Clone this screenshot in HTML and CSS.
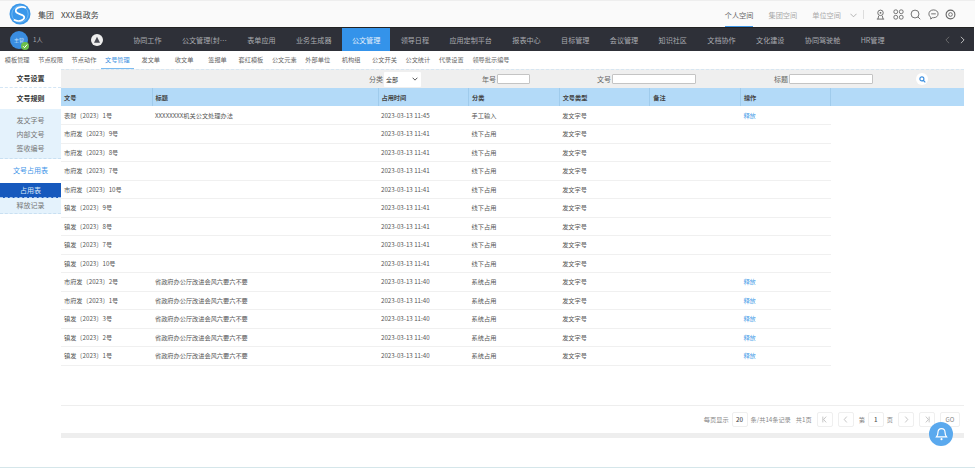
FILE: index.html
```html
<!DOCTYPE html>
<html lang="zh-CN">
  <head>
    <meta charset="UTF-8" />
    <title>文号管理</title>
    <link rel="stylesheet" href="styles.css">
  </head>
  <body>
    <!-- En-tête -->
    <header class="topbar">
      <svg class="logo" viewBox="0 0 22 22" width="22" height="22">
        <circle cx="11" cy="11" r="10.5" fill="#3a97ea" />
        <circle cx="11" cy="11" r="8.200" fill="none" stroke="#7fc0f5" stroke-width=".8" />
        <path d="M17 5C12.500 2.800 6.300 4.500 6.800 8.200S15.500 11 15.300 14.300 9.800 19.200 4.800 16.800" fill="none" stroke="#fff" stroke-width="1.700" />
      </svg>
      <span class="org">集团</span>
      <span class="org-name">XXX县政务</span>
      <nav class="spaces">
        <a class="space active">个人空间</a>
        <a class="space">集团空间</a>
        <a class="space">单位空间</a>
        <svg class="chevron" viewBox="0 0 8 5" width="7" height="5"><path d="M.5.5 4 4 7.500.5" fill="none" stroke="#999" stroke-width=".8" /></svg>
        <span class="divider"></span>
      </nav>
      <div class="tools">
        <svg viewBox="0 0 12 12" width="11" height="11"><circle cx="6" cy="4.200" r="3" fill="none" stroke="#666" /><circle cx="6" cy="4.200" r="1" fill="#666" /><path d="M2 11h8M4 7.500 3.200 11M8 7.500l.8 3.500" fill="none" stroke="#666" /></svg>
        <svg viewBox="0 0 12 12" width="11" height="11"><g fill="none" stroke="#666"><rect x="1" y="1" width="4" height="4" rx="1.600" /><rect x="7" y="1" width="4" height="4" rx="1.600" /><rect x="1" y="7" width="4" height="4" rx="1.600" /><rect x="7" y="7" width="4" height="4" rx="1.600" /></g></svg>
        <svg viewBox="0 0 12 12" width="11" height="11"><circle cx="5.500" cy="5.500" r="4.300" fill="none" stroke="#666" /><path d="m8.600 8.600 2.600 2.600" stroke="#666" /></svg>
        <svg viewBox="0 0 12 12" width="11" height="11"><path d="M6 1c3 0 5 1.800 5 4.300S9 9.500 6 9.500H4.800L3 11V9C1.800 8.300 1 7 1 5.300 1 2.800 3 1 6 1Z" fill="none" stroke="#666" /><path d="M3.500 5.300h5" stroke="#666" /></svg>
        <svg viewBox="0 0 12 12" width="11" height="11"><circle cx="6" cy="6" r="4.800" fill="none" stroke="#666" stroke-width="1.200" /><circle cx="6" cy="6" r="2" fill="none" stroke="#666" /></svg>
      </div>
    </header>

    <!-- Menu principal -->
    <nav class="mainnav">
      <div class="user">
        <span class="avatar">主管<i class="check"><svg viewBox="0 0 8 8" width="8" height="8"><path d="M2 4.200 3.500 5.700 6.200 2.500" fill="none" stroke="#fff" /></svg></i></span>
        <span class="count">1人</span>
      </div>
      <span class="home"><svg viewBox="0 0 12 12" width="12" height="12"><circle cx="6" cy="6" r="6" fill="#eee" /><path d="M6 2.800 9 8.800H3Z" fill="#4a4c55" /></svg></span>
      <div class="menu">
        <a>协同工作</a>
        <a>公文管理(封…</a>
        <a>表单应用</a>
        <a>业务生成器</a>
        <a class="active">公文管理</a>
        <a>领导日程</a>
        <a>应用定制平台</a>
        <a>报表中心</a>
        <a>目标管理</a>
        <a>会议管理</a>
        <a>知识社区</a>
        <a>文档协作</a>
        <a>文化建设</a>
        <a>协同驾驶舱</a>
        <a>HR管理</a>
      </div>
      <div class="arrows">
        <svg viewBox="0 0 6 10" width="5" height="8"><path d="M5 1 1 5l4 4" fill="none" stroke="#777" /></svg>
        <svg viewBox="0 0 6 10" width="5" height="8"><path d="m1 1 4 4-4 4" fill="none" stroke="#ddd" /></svg>
      </div>
    </nav>

    <!-- Onglets -->
    <nav class="tabs">
      <a>模板管理</a>
      <a>节点权限</a>
      <a>节点动作</a>
      <a class="active">文号管理</a>
      <a>发文单</a>
      <a>收文单</a>
      <a>签报单</a>
      <a>套红模板</a>
      <a>公文元素</a>
      <a>外部单位</a>
      <a>机构组</a>
      <a>公文开关</a>
      <a>公文统计</a>
      <a>代录设置</a>
      <a class="wide">领导批示编号</a>
    </nav>

    <div class="layout">
      <aside class="sidebar">
        <div class="side-title">文号设置</div>
        <div class="side-title tall">文号规则</div>
        <ul class="side-list">
          <li>发文字号</li>
          <li>内部文号</li>
          <li>签收编号</li>
        </ul>
        <div class="side-link">文号占用表</div>
        <ul class="side-sub">
          <li class="active">占用表</li>
          <li>释放记录</li>
        </ul>
      </aside>

      <main class="content">
        <form class="filters">
          <label class="filter f-type">分类<span class="select">全部<svg viewBox="0 0 8 5" width="6" height="4"><path d="M.8.8 4 4 7.200.8" fill="none" stroke="#333" stroke-width="1.100" /></svg></span></label>
          <label class="filter f-year">年号<span class="field short"></span></label>
          <label class="filter f-num">文号<span class="field"></span></label>
          <label class="filter f-title">标题<span class="field"></span></label>
          <span class="search"><svg viewBox="0 0 8 8" width="7" height="7"><circle cx="3.300" cy="3.300" r="2.300" fill="none" stroke="#3c8fe0" stroke-width="1.300" /><path d="m5 5 2.200 2.200" stroke="#3c8fe0" stroke-width="1.300" /></svg></span>
        </form>

        <div class="table-area">
          <table class="grid">
            <colgroup>
              <col class="c1" /><col class="c2" /><col class="c3" /><col class="c3" /><col class="c3" /><col class="c3" /><col class="c3" /><col />
            </colgroup>
            <thead>
              <tr><th>文号</th><th>标题</th><th>占用时间</th><th>分类</th><th>文号类型</th><th>备注</th><th>操作</th><th></th></tr>
            </thead>
            <tbody>
              <tr><td>表财〔2023〕1号</td><td>XXXXXXXX机关公文处理办法</td><td>2023-03-13 11:45</td><td>手工输入</td><td>发文字号</td><td></td><td><a>释放</a></td></tr>
              <tr><td>市府发〔2023〕9号</td><td></td><td>2023-03-13 11:41</td><td>线下占用</td><td>发文字号</td><td></td><td></td></tr>
              <tr><td>市府发〔2023〕8号</td><td></td><td>2023-03-13 11:41</td><td>线下占用</td><td>发文字号</td><td></td><td></td></tr>
              <tr><td>市府发〔2023〕7号</td><td></td><td>2023-03-13 11:41</td><td>线下占用</td><td>发文字号</td><td></td><td></td></tr>
              <tr><td>市府发〔2023〕10号</td><td></td><td>2023-03-13 11:41</td><td>线下占用</td><td>发文字号</td><td></td><td></td></tr>
              <tr><td>镇发〔2023〕9号</td><td></td><td>2023-03-13 11:41</td><td>线下占用</td><td>发文字号</td><td></td><td></td></tr>
              <tr><td>镇发〔2023〕8号</td><td></td><td>2023-03-13 11:41</td><td>线下占用</td><td>发文字号</td><td></td><td></td></tr>
              <tr><td>镇发〔2023〕7号</td><td></td><td>2023-03-13 11:41</td><td>线下占用</td><td>发文字号</td><td></td><td></td></tr>
              <tr><td>镇发〔2023〕10号</td><td></td><td>2023-03-13 11:41</td><td>线下占用</td><td>发文字号</td><td></td><td></td></tr>
              <tr><td>市府发〔2023〕2号</td><td>省政府办公厅改进会风六要六不要</td><td>2023-03-13 11:40</td><td>系统占用</td><td>发文字号</td><td></td><td><a>释放</a></td></tr>
              <tr><td>市府发〔2023〕1号</td><td>省政府办公厅改进会风六要六不要</td><td>2023-03-13 11:40</td><td>系统占用</td><td>发文字号</td><td></td><td><a>释放</a></td></tr>
              <tr><td>镇发〔2023〕3号</td><td>省政府办公厅改进会风六要六不要</td><td>2023-03-13 11:40</td><td>系统占用</td><td>发文字号</td><td></td><td><a>释放</a></td></tr>
              <tr><td>镇发〔2023〕2号</td><td>省政府办公厅改进会风六要六不要</td><td>2023-03-13 11:40</td><td>系统占用</td><td>发文字号</td><td></td><td><a>释放</a></td></tr>
              <tr><td>镇发〔2023〕1号</td><td>省政府办公厅改进会风六要六不要</td><td>2023-03-13 11:40</td><td>系统占用</td><td>发文字号</td><td></td><td><a>释放</a></td></tr>
            </tbody>
          </table>
        </div>

        <div class="pager">
          <span>每页显示</span>
          <span class="box num">20</span>
          <span>条/共14条记录</span>
          <span class="total">共1页</span>
          <span class="box btn"><svg viewBox="0 0 6 8" width="5" height="7"><path d="M1 .5v7M5 .5 2 4l3 3.500" fill="none" stroke="#aaa" stroke-width=".8" /></svg></span>
          <span class="box btn"><svg viewBox="0 0 6 8" width="5" height="7"><path d="M4.500.5 1.500 4l3 3.500" fill="none" stroke="#aaa" stroke-width=".8" /></svg></span>
          <span class="page-of">第</span>
          <span class="box num">1</span>
          <span>页</span>
          <span class="box btn"><svg viewBox="0 0 6 8" width="5" height="7"><path d="m1.500.5 3 3.500-3 3.500" fill="none" stroke="#aaa" stroke-width=".8" /></svg></span>
          <span class="box btn"><svg viewBox="0 0 6 8" width="5" height="7"><path d="M5 .5v7M1 .5 4 4 1 7.500" fill="none" stroke="#aaa" stroke-width=".8" /></svg></span>
          <span class="box go">GO</span>
        </div>
        <div class="scrollbar"></div>
      </main>
    </div>

    <!-- Bulle de notification -->
    <span class="bell">
      <svg viewBox="0 0 12 13" width="13" height="14"><path d="M6 1.500c-2.200 0-3.300 1.600-3.300 3.600 0 2.400-.9 3.400-1.400 4h9.400c-.5-.6-1.400-1.600-1.400-4 0-2-1.100-3.600-3.300-3.600Z" fill="none" stroke="#fff" stroke-width="1.100" /><circle cx="6" cy="11.300" r="1" fill="#fff" /></svg>
    </span>
  </body>
</html>
```

FILE: styles.css
```css
/* Reset minimal */
* {
  margin: 0;
  padding: 0;
  box-sizing: border-box;
}

html,
body {
  height: 100%;
  overflow: hidden;
}

body {
  position: relative;
  font-family: "Noto Sans CJK SC", "Noto Sans", sans-serif;
  font-size: 6.2px;
  color: #555;
  background: #fff;
  border-bottom: 1px solid #d5e6ea;
}

ul {
  list-style: none;
}

/* En-tête */
.topbar {
  display: flex;
  align-items: center;
  height: 27px;
  padding-left: 9px;
  background: #fafafa;
  border-top: 1px solid #eee;
}

.org {
  margin-left: 7px;
  font-size: 8px;
  color: #444;
}

.org-name {
  margin-left: 7px;
  font-size: 8px;
  color: #444;
}

.spaces {
  display: flex;
  align-items: center;
  align-self: stretch;
  gap: 15px;
  margin-left: auto;
}

.space {
  display: flex;
  align-items: center;
  height: 100%;
  padding-top: 2px;
  font-size: 7.200px;
  color: #aaa;
  border-bottom: 1px solid transparent;
}

.space.active {
  color: #666;
  border-bottom-color: #3d95e6;
}

.chevron {
  margin-left: -6px;
  margin-top: 2px;
}

.divider {
  width: 1px;
  height: 9px;
  margin-left: -9px;
  background: #ddd;
}

.tools {
  display: flex;
  align-items: center;
  gap: 6.500px;
  padding: 0 19px 0 11px;
}

/* Menu principal */
.mainnav {
  display: flex;
  align-items: stretch;
  height: 24px;
  background: #2e3038;
  margin-right: 1px;
  border-top: 1px solid #222;
}

.user {
  display: flex;
  align-items: center;
  width: 91px;
  padding-left: 10px;
}

.avatar {
  position: relative;
  display: flex;
  align-items: center;
  justify-content: center;
  width: 18px;
  height: 18px;
  border-radius: 50%;
  background: #3a8de0;
  color: #cfe4fa;
  font-size: 5px;
}

.check {
  position: absolute;
  right: -1px;
  bottom: -1px;
  display: flex;
  width: 8px;
  height: 8px;
  border-radius: 50%;
  background: #6cbf4b;
}

.count {
  margin-left: 5px;
  color: #a5a7ad;
  font-size: 6.200px;
}

.home {
  display: flex;
  align-items: center;
  width: 32px;
}

.menu {
  display: flex;
  flex: 1;
}

.menu a {
  display: flex;
  align-items: center;
  padding: 0 10.200px;
  font-size: 7.100px;
  color: #a9abb0;
  white-space: nowrap;
}

.menu a.active {
  color: #e6f1fb;
  background: #3493ea;
}

.arrows {
  display: flex;
  align-items: center;
  gap: 10px;
  padding-right: 9px;
}

/* Onglets */
.tabs {
  display: flex;
  align-items: stretch;
  height: 18px;
  padding-left: .5px;
  background: #fff;
}

.tabs a {
  display: flex;
  align-items: center;
  justify-content: center;
  width: 33.400px;
  font-size: 6.200px;
  color: #666;
  border-bottom: 1px solid transparent;
}

.tabs a.active {
  color: #3a8fe0;
  border-bottom-color: #7dbcf0;
}

.tabs a.wide {
  width: 46px;
}

.layout {
  display: flex;
  height: 369px;
}

/* Barre latérale */
.sidebar {
  width: 61px;
  flex-shrink: 0;
  text-align: center;
  color: #777;
  font-size: 7px;
}

.side-title {
  height: 19px;
  line-height: 18px;
  font-weight: 700;
  color: #333;
  border-bottom: 1px dashed #d4e6f5;
}

.side-title.tall {
  height: 21px;
  line-height: 21px;
  border-bottom: 0;
}

.side-list {
  height: 50px;
  padding-top: 4px;
  background: #e4f2fc;
  border-bottom: 1px dashed #c9e0f2;
}

.side-list li {
  height: 14px;
  line-height: 14px;
}

.side-link {
  height: 24px;
  line-height: 22px;
  color: #3f95e8;
}

.side-sub {
  background: #e4f2fc;
  border-bottom: 1px dashed #c9e0f2;
}

.side-sub li {
  height: 15px;
  line-height: 15px;
}

.side-sub li.active {
  background: #1659bd;
  color: #dbe9f8;
  border-bottom: 1px dashed #a9c8ee;
}

.content {
  display: flex;
  flex-direction: column;
  width: 903px;
}

/* Filtres */
.filters {
  display: flex;
  align-items: center;
  height: 19px;
  background: #efefef;
  border-top: 1px dashed #d6e6f2;
}

.filter {
  display: flex;
  align-items: center;
  gap: 1px;
  font-size: 7px;
  color: #666;
}

.f-type {
  margin-left: 308px;
}

.f-year {
  margin-left: 61px;
}

.f-num {
  margin-left: 67px;
}

.f-title {
  margin-left: 78px;
}

.select {
  display: flex;
  align-items: center;
  justify-content: space-between;
  width: 37px;
  height: 15px;
  padding: 0 3px 0 2px;
  font-size: 6px;
  color: #333;
  background: #fff;
  border-radius: 1px;
}

.field {
  width: 84px;
  height: 10px;
  background: #fff;
  border: 1px solid #c4c4c4;
  border-radius: 1px;
}

.field.short {
  width: 33px;
}

.search {
  display: flex;
  align-items: center;
  justify-content: center;
  width: 12px;
  height: 12px;
  margin-left: 43px;
  border-radius: 50%;
  background: #fff;
}

/* Tableau */
.table-area {
  flex: 1;
}

.grid {
  width: 903px;
  table-layout: fixed;
  border-collapse: collapse;
}

.c1 {
  width: 91px;
}

.c2 {
  width: 226px;
}

.c3 {
  width: 90.600px;
}

.grid th {
  height: 18px;
  padding-left: 3px;
  text-align: left;
  font-weight: 700;
  color: #444;
  background: #b3daf8;
  border-right: 1px solid #9fcbec;
}

.grid th:last-child {
  border-right: 0;
}

.grid td {
  height: 18.500px;
  padding-left: 3px;
  color: #555;
  white-space: nowrap;
  border-bottom: 1px solid #f0f0f0;
}

.grid td a {
  color: #4a9ee8;
}

/* Pagination */
.pager {
  display: flex;
  align-items: center;
  justify-content: flex-end;
  height: 28px;
  padding-right: 4px;
  color: #888;
  border-top: 1px solid #eee;
}

.box {
  display: flex;
  align-items: center;
  justify-content: center;
  height: 15px;
  background: #fff;
  border: 1px solid #efefef;
  border-radius: 2px;
}

.num {
  width: 16px;
  margin: 0 3px;
  font-weight: 500;
  color: #555;
}

.btn {
  width: 16px;
  margin-left: 5px;
}

.total {
  margin-left: 5px;
}

.page-of {
  margin-left: 5px;
}

.go {
  width: 20px;
  margin-left: 5px;
  color: #888;
}

.scrollbar {
  height: 5px;
  background: #eee;
}

/* Bulle */
.bell {
  position: absolute;
  left: 929px;
  top: 422px;
  display: flex;
  align-items: center;
  justify-content: center;
  width: 24px;
  height: 24px;
  border-radius: 50%;
  background: #5aa9ee;
}
```
